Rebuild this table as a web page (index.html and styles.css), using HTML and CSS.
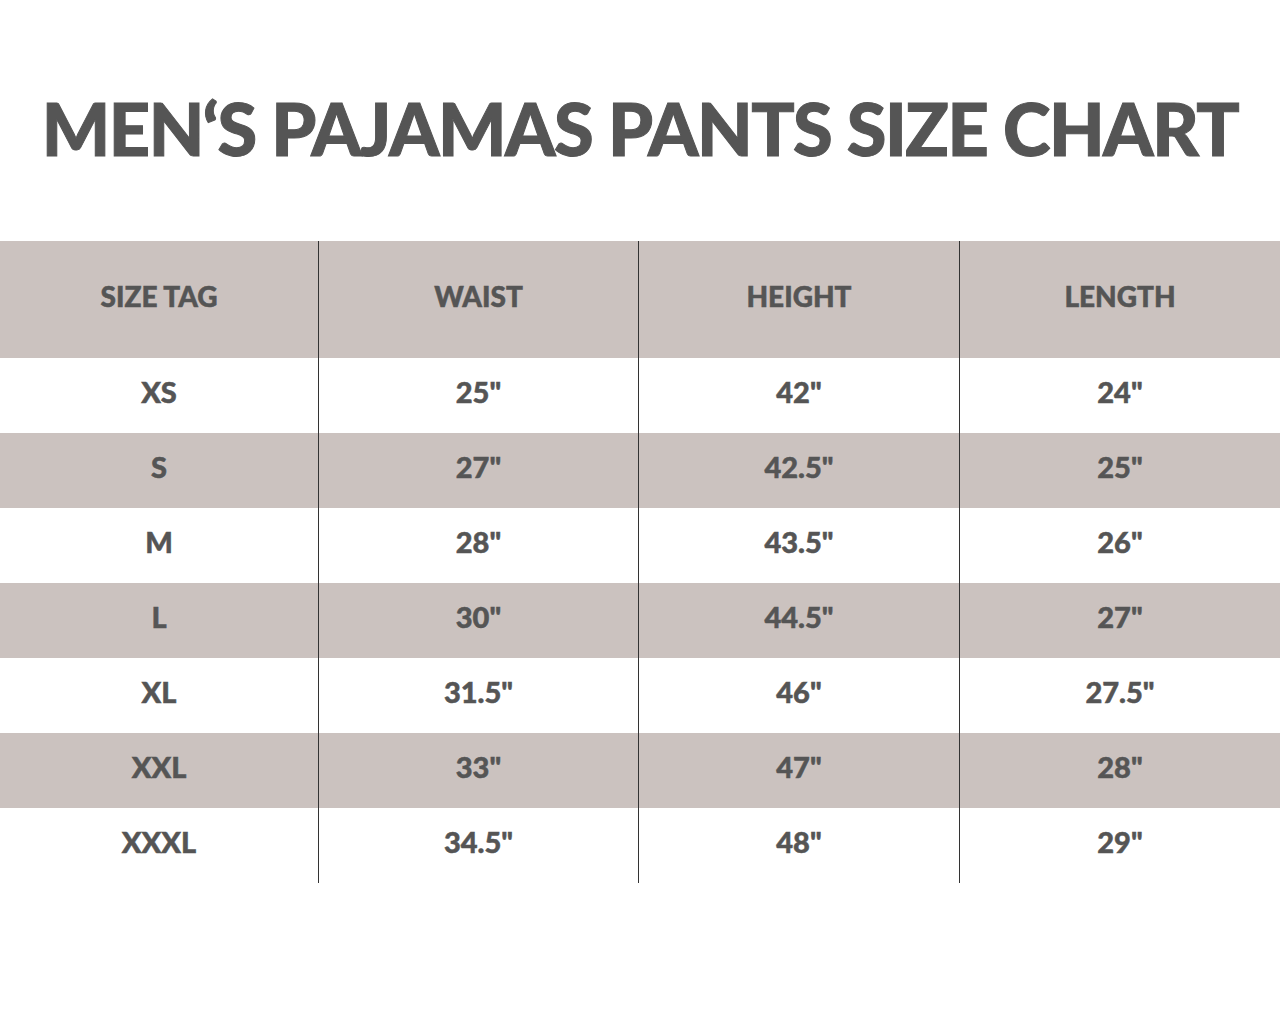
FILE: index.html
```html
<!DOCTYPE html>
<html>
<head>
<meta charset="utf-8">
<link rel="stylesheet" href="styles.css">
</head>
<body>
<h1 class="title">MEN‘S PAJAMAS PANTS SIZE CHART</h1>
<div class="chart">
  <div class="row head">
    <div class="cell">SIZE TAG</div><div class="cell">WAIST</div><div class="cell">HEIGHT</div><div class="cell">LENGTH</div>
  </div>
  <div class="row">
    <div class="cell">XS</div><div class="cell">25"</div><div class="cell">42"</div><div class="cell">24"</div>
  </div>
  <div class="row shade">
    <div class="cell">S</div><div class="cell">27"</div><div class="cell">42.5"</div><div class="cell">25"</div>
  </div>
  <div class="row">
    <div class="cell">M</div><div class="cell">28"</div><div class="cell">43.5"</div><div class="cell">26"</div>
  </div>
  <div class="row shade">
    <div class="cell">L</div><div class="cell">30"</div><div class="cell">44.5"</div><div class="cell">27"</div>
  </div>
  <div class="row">
    <div class="cell">XL</div><div class="cell">31.5"</div><div class="cell">46"</div><div class="cell">27.5"</div>
  </div>
  <div class="row shade">
    <div class="cell">XXL</div><div class="cell">33"</div><div class="cell">47"</div><div class="cell">28"</div>
  </div>
  <div class="row">
    <div class="cell">XXXL</div><div class="cell">34.5"</div><div class="cell">48"</div><div class="cell">29"</div>
  </div>
</div>
</body>
</html>
```
FILE: styles.css
```css
html, body {
  margin: 0;
  padding: 0;
  background: #ffffff;
}
body {
  width: 1280px;
  height: 1024px;
  font-family: "Lato", "Liberation Sans", sans-serif;
  color: #555555;
}
.title {
  margin: 0;
  padding-top: 92px;
  height: 72px;
  margin-bottom: 77px;
  font-size: 72px;
  line-height: 72px;
  font-weight: 900;
  text-align: center;
  letter-spacing: -1.5px;
  white-space: nowrap;
  color: #555555;
  -webkit-text-stroke: 1px #555555;
}
.chart {
  display: flex;
  flex-direction: column;
}
.row {
  display: grid;
  grid-template-columns: 318px 320px 321px 1fr;
  height: 75px;
}
.row.head {
  height: 117px;
  background: #cbc2bf;
}
.row.shade {
  background: #cbc2bf;
}
.cell {
  display: flex;
  align-items: center;
  justify-content: center;
  font-size: 29px;
  font-weight: 900;
  padding-bottom: 8px;
  box-sizing: border-box;
  -webkit-text-stroke: 0.5px #555555;
}
.head .cell {
  font-size: 28px;
  letter-spacing: 0;
}
.cell + .cell {
  border-left: 1px solid #333333;
}
```
